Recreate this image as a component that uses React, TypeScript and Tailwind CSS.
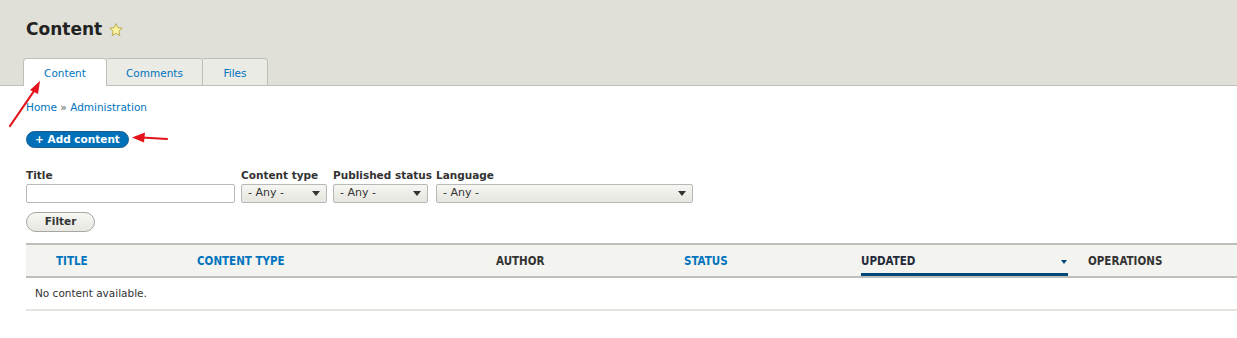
import React from 'react';

const font = "font-['DejaVu_Sans','Liberation_Sans',sans-serif]";
const thFont = "font-['DejaVu_Sans_Condensed','DejaVu_Sans',sans-serif]";

function Select({ width }: { width: string }) {
  return (
    <div
      className={`${width} h-[19px] flex items-center justify-between pl-[6px] pr-[6px] border border-[#b8b8b8] rounded-[2px] bg-gradient-to-b from-[#f6f6f2] to-[#e6e5df] text-[#333] text-[11px]`}
    >
      <span>- Any -</span>
      <svg width="8" height="5" viewBox="0 0 8 5">
        <path d="M0 0 L8 0 L4 5 Z" fill="#333" />
      </svg>
    </div>
  );
}

function Arrows() {
  return (
    <svg className="absolute inset-0 pointer-events-none" width="1237" height="338">
      {/* tab arrow */}
      <line x1="10" y1="126" x2="34" y2="91" stroke="#e3121b" strokeWidth="2.2" strokeLinecap="round" />
      <path d="M40 81 L30 90 L38 94 Z" fill="#e3121b" />
      {/* button arrow */}
      <line x1="167" y1="139" x2="142" y2="137.5" stroke="#e3121b" strokeWidth="2.2" strokeLinecap="round" />
      <path d="M132 137.5 L145 132.5 L144 142.5 Z" fill="#e3121b" />
    </svg>
  );
}

export default function App() {
  return (
    <div className={`relative w-[1237px] h-[338px] overflow-hidden bg-white ${font} text-[#333]`}>
      {/* Header */}
      <div className="bg-[#e0e0d8] border-b border-[#bfbfba] pt-[18px] pl-[23px]">
        <div className="flex items-center h-[23px] ml-[3px] gap-[6px]">
          <h1 className="text-[17px] font-bold text-[#232323] leading-[23px]">Content</h1>
          <svg width="16" height="16" viewBox="0 0 24 24" className="mt-[1px]">
            <path
              d="M12 2.5 L14.8 8.6 L21.4 9.3 L16.4 13.8 L17.9 20.4 L12 17 L6.1 20.4 L7.6 13.8 L2.6 9.3 L9.2 8.6 Z"
              fill="#fbf3a2"
              stroke="#b6a74a"
              strokeWidth="1.4"
              strokeLinejoin="round"
            />
          </svg>
        </div>
        <div className="flex mt-[17px] -mb-px text-[10.5px] text-[#0074bd]">
          <div className="w-[84px] h-[28px] pt-[3px] flex items-center justify-center bg-white border border-b-0 border-[#bfbfba] rounded-t-[4px]">
            Content
          </div>
          <div className="w-[96px] h-[28px] pt-[3px] flex items-center justify-center bg-[#ebebe5] border border-l-0 border-[#bfbfba] rounded-tr-[3px]">
            Comments
          </div>
          <div className="w-[65px] h-[28px] pt-[3px] flex items-center justify-center bg-[#ebebe5] border border-l-0 border-[#bfbfba] rounded-tr-[4px]">
            Files
          </div>
        </div>
      </div>

      {/* Body */}
      <div className="pl-[26px] text-[10.5px]">
        <div className="mt-[14px] h-[14px] leading-[14px] text-[#0074bd]">
          Home <span className="text-[#555]">»</span> Administration
        </div>

        <div className="mt-[17px] w-[103px] h-[17px] flex items-center justify-center rounded-full bg-[#0071b8] border border-[#1e5c90] text-white font-bold text-[10.5px]">
          + Add content
        </div>

        <div className="mt-[19px] flex items-start">
          <div className="w-[209px]">
            <div className="h-[16px] leading-[16px] font-bold text-[#333]">Title</div>
            <div className="mt-[1px] h-[19px] border border-[#b8b8b8] rounded-[2px] bg-white" />
          </div>
          <div className="ml-[6px]">
            <div className="h-[16px] leading-[16px] font-bold text-[#333] whitespace-nowrap">Content type</div>
            <div className="mt-[1px]">
              <Select width="w-[86px]" />
            </div>
          </div>
          <div className="ml-[6px] w-[97px]">
            <div className="h-[16px] leading-[16px] font-bold text-[#333] whitespace-nowrap">Published status</div>
            <div className="mt-[1px]">
              <Select width="w-[95px]" />
            </div>
          </div>
          <div className="ml-[6px]">
            <div className="h-[16px] leading-[16px] font-bold text-[#333]">Language</div>
            <div className="mt-[1px]">
              <Select width="w-[257px]" />
            </div>
          </div>
        </div>

        <div className="mt-[9px] w-[69px] h-[20px] flex items-center justify-center rounded-full border border-[#a6a6a6] bg-gradient-to-b from-[#f6f6f3] to-[#e8e7e1] font-bold text-[#333]">
          Filter
        </div>

        {/* Table */}
        <div className="mt-[11px] w-[1240px]">
          <div
            className={`grid grid-cols-[20px_141px_299px_188px_177px_227px_188px] h-[35px] items-stretch bg-[#f3f3ef] border-y-2 border-[#bfbfba] ${thFont} font-bold text-[11.5px] uppercase`}
          >
            <div />
            <div className="flex items-center pt-[3px] px-[10px] text-[#0074bd]">Title</div>
            <div className="flex items-center pt-[3px] px-[10px] text-[#0074bd]">Content type</div>
            <div className="flex items-center pt-[3px] px-[10px] text-[#333]">Author</div>
            <div className="flex items-center pt-[3px] px-[10px] text-[#0074bd]">Status</div>
            <div className="px-[10px] flex">
              <div className="flex-1 flex items-center justify-between border-b-[3px] border-[#004875] pt-[5px] text-[#232a3a]">
                <span>Updated</span>
                <svg width="6" height="4" viewBox="0 0 6 4" className="mr-[1px]">
                  <path d="M0 0 L6 0 L3 4 Z" fill="#004875" />
                </svg>
              </div>
            </div>
            <div className="flex items-center pt-[3px] px-[10px] text-[#333]">Operations</div>
          </div>
          <div className="h-[33px] flex items-center pl-[9px] border-b-2 border-[#e6e4df] text-[#333]">
            No content available.
          </div>
        </div>
      </div>

      <Arrows />
    </div>
  );
}
